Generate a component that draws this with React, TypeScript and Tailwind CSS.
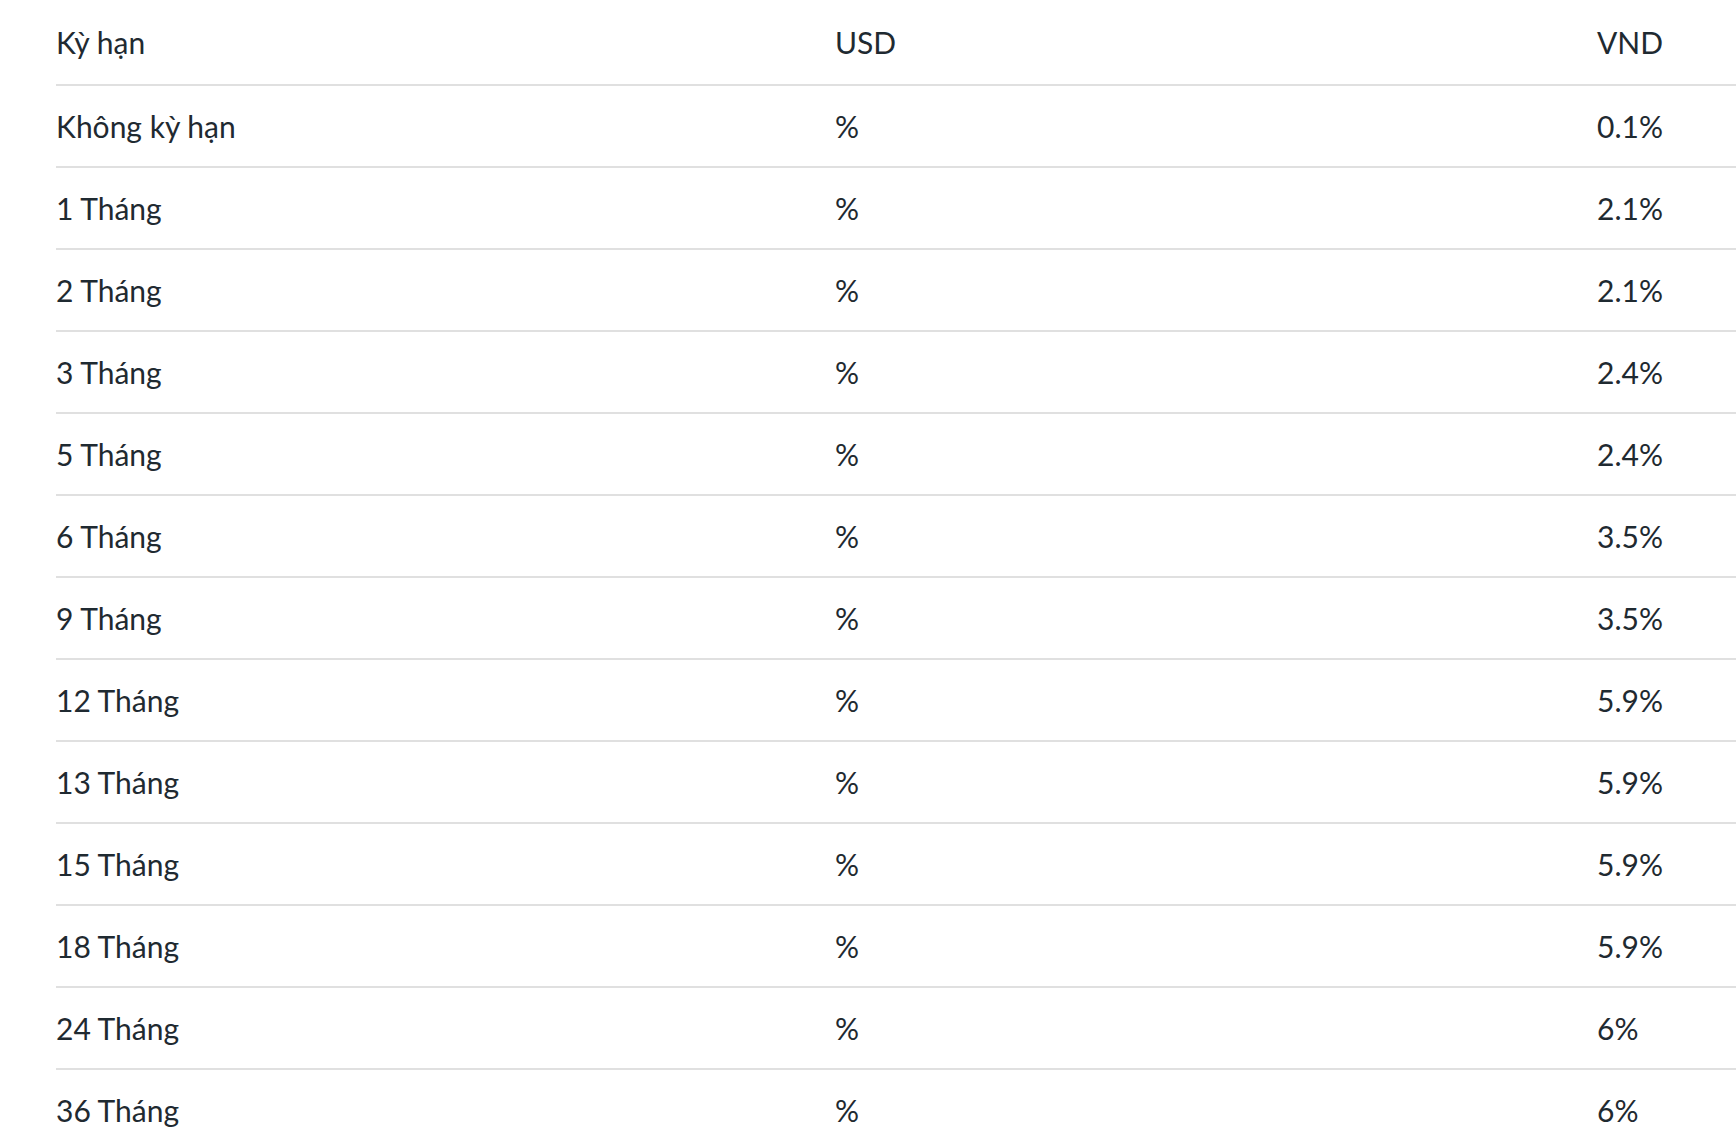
import React from "react";

const rows: [string, string, string][] = [
  ["Không kỳ hạn", "%", "0.1%"],
  ["1 Tháng", "%", "2.1%"],
  ["2 Tháng", "%", "2.1%"],
  ["3 Tháng", "%", "2.4%"],
  ["5 Tháng", "%", "2.4%"],
  ["6 Tháng", "%", "3.5%"],
  ["9 Tháng", "%", "3.5%"],
  ["12 Tháng", "%", "5.9%"],
  ["13 Tháng", "%", "5.9%"],
  ["15 Tháng", "%", "5.9%"],
  ["18 Tháng", "%", "5.9%"],
  ["24 Tháng", "%", "6%"],
  ["36 Tháng", "%", "6%"],
];

export default function App() {
  return (
    <div className="w-[1736px] h-[1144px] overflow-hidden bg-white">
      <div
        className="ml-[56px] w-[1720px] text-[30px] text-[#1f2a31]"
        style={{ fontFamily: "Lato, 'Open Sans', sans-serif" }}
      >
        <div className="grid grid-cols-[779px_762px_1fr] items-center h-[86px] border-b-2 border-[#e0e0e0]">
          <div>Kỳ hạn</div>
          <div>USD</div>
          <div>VND</div>
        </div>
        {rows.map((r) => (
          <div
            key={r[0]}
            className="grid grid-cols-[779px_762px_1fr] items-center h-[82px] border-b-2 border-[#e0e0e0]"
          >
            <div>{r[0]}</div>
            <div>{r[1]}</div>
            <div>{r[2]}</div>
          </div>
        ))}
      </div>
    </div>
  );
}
